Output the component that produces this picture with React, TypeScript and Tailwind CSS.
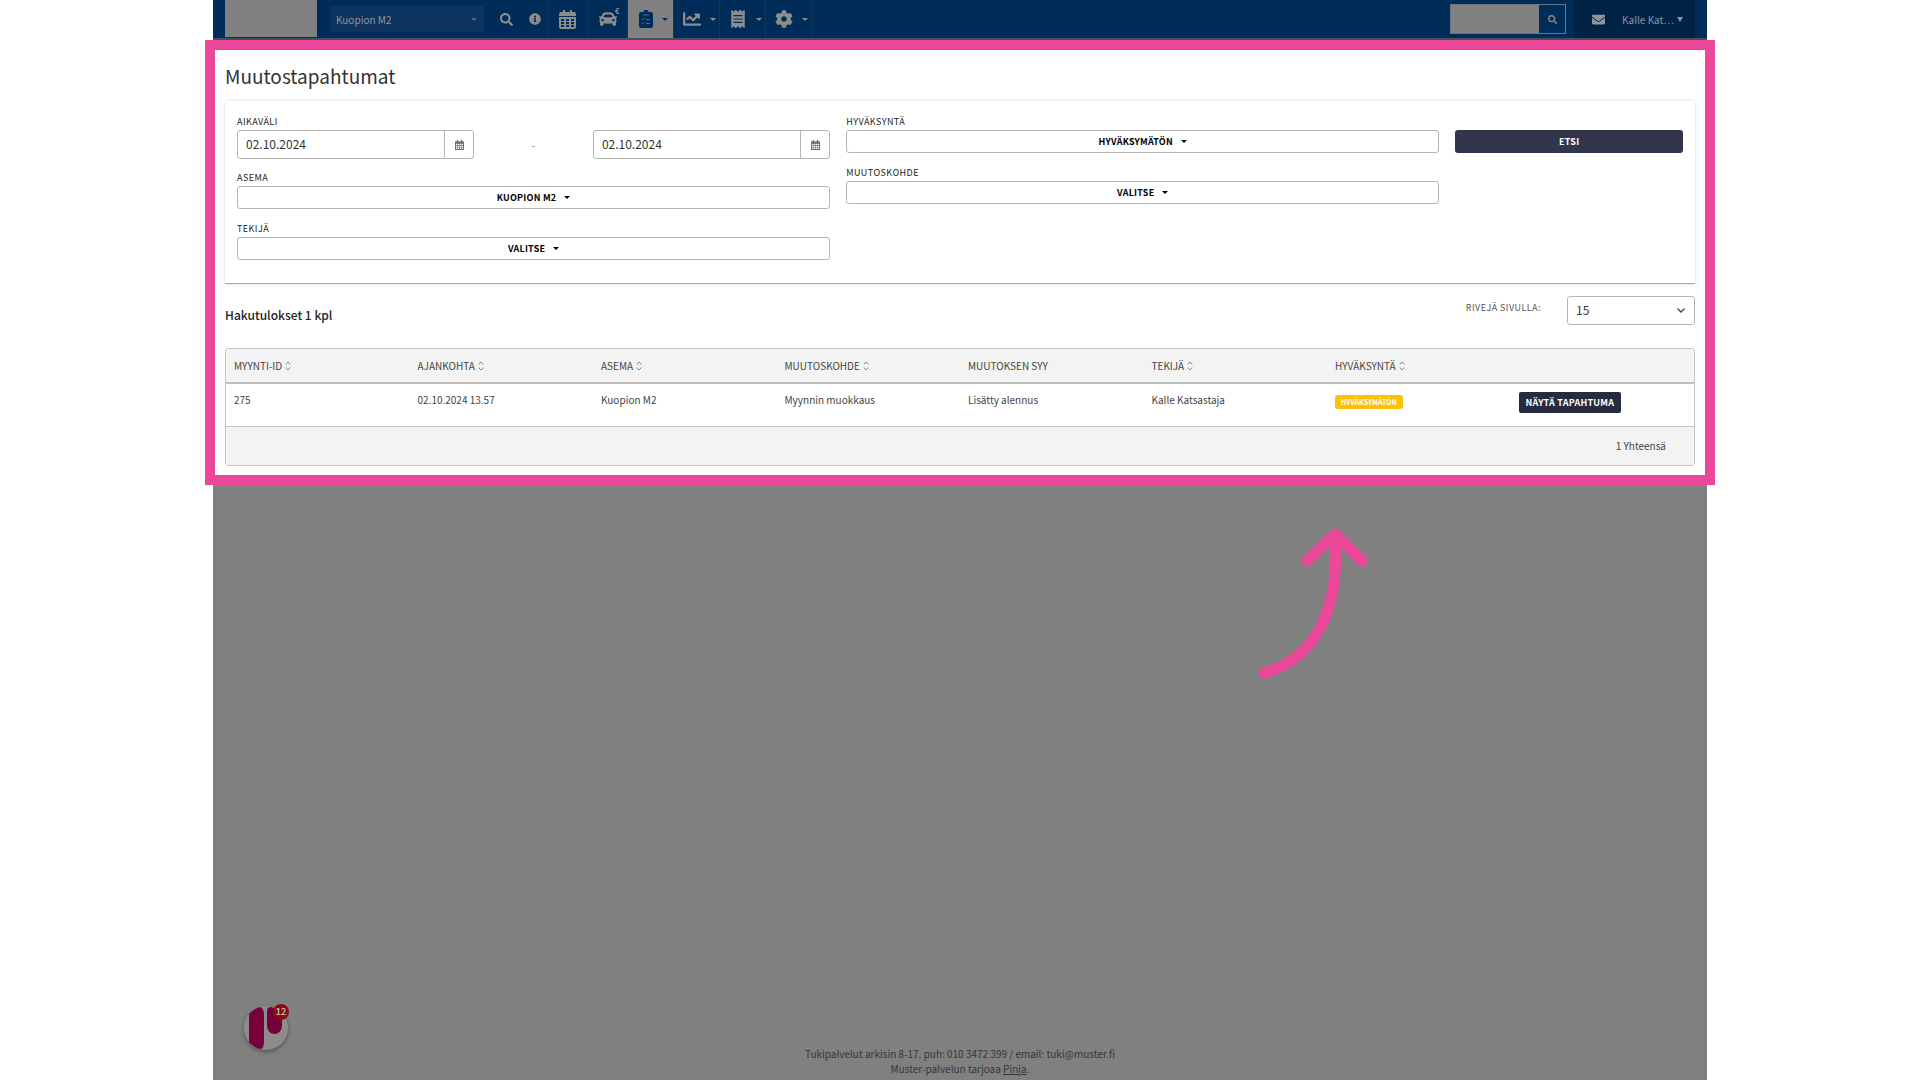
import type { ReactNode } from "react";
import {
  FaCar,
  FaChartLine,
  FaCog,
  FaEnvelope,
  FaInfoCircle,
  FaReceipt,
  FaSearch,
} from "react-icons/fa";

const columns = [
  { label: "MYYNTI-ID", sortable: true },
  { label: "AJANKOHTA", sortable: true },
  { label: "ASEMA", sortable: true },
  { label: "MUUTOSKOHDE", sortable: true },
  { label: "MUUTOKSEN SYY", sortable: false },
  { label: "TEKIJÄ", sortable: true },
  { label: "HYVÄKSYNTÄ", sortable: true },
];

const rows = [
  {
    id: "275",
    time: "02.10.2024 13.57",
    station: "Kuopion M2",
    target: "Myynnin muokkaus",
    reason: "Lisätty alennus",
    author: "Kalle Katsastaja",
    status: "HYVÄKSYMÄTÖN",
  },
];

function Caret({ className }: { className?: string }) {
  return (
    <svg viewBox="0 0 6 3" className={`w-[6px] h-[3px] shrink-0 ${className ?? ""}`}>
      <path d="M0 0h6L3 3z" fill="currentColor" />
    </svg>
  );
}

function CalendarGridIcon() {
  return (
    <svg viewBox="0 0 17 19" className="w-[17px] h-[19px]">
      <path
        d="M4 0h2v2h5V0h2v2h2a2 2 0 0 1 2 2v2H0V4a2 2 0 0 1 2-2h2z"
        fill="currentColor"
      />
      <path
        fillRule="evenodd"
        d="M0 7h17v10a2 2 0 0 1-2 2H2a2 2 0 0 1-2-2zM2 9v2h3V9zm5 0v2h3V9zm5 0v2h3V9zM2 12v2h3v-2zm5 0v2h3v-2zm5 0v2h3v-2zM2 15v2h3v-2zm5 0v2h3v-2zm5 0v2h3v-2z"
        fill="currentColor"
      />
    </svg>
  );
}

function CalendarSmallIcon() {
  return (
    <svg viewBox="0 0 10 11" className="w-[9px] h-[10px]">
      <path
        fillRule="evenodd"
        d="M2 0h1.500v1.500h3V0H8v1.500h2V11H0V1.500h2zM1 4v1.600h1.600V4zm2.200 0v1.600h1.600V4zm2.200 0v1.600H7V4zm2.200 0v1.600H9V4zM1 6.200v1.600h1.600V6.200zm2.200 0v1.600h1.600V6.200zm2.200 0v1.600H7V6.200zm2.200 0v1.600H9V6.200zM1 8.400V10h1.600V8.400zm2.200 0V10h1.600V8.400zm2.200 0V10H7V8.400zm2.200 0V10H9V8.400z"
        fill="#666"
      />
    </svg>
  );
}

function ClipboardIcon() {
  return (
    <svg viewBox="0 0 14 18" className="w-[14px] h-[18px]">
      <path
        d="M2 2h2.500a2.500 2.500 0 0 1 5 0H12a2 2 0 0 1 2 2v12a2 2 0 0 1-2 2H2a2 2 0 0 1-2-2V4a2 2 0 0 1 2-2z"
        fill="#002c59"
      />
      <path
        d="M4 5h6M7 9.500h4M7 13.500h4M2.500 9l1 1L5.500 8M2.800 13.500h1.600"
        fill="none"
        stroke="#808080"
        strokeWidth="0.700"
      />
    </svg>
  );
}

function SortIcon() {
  return (
    <svg viewBox="0 0 6 10" className="w-[6px] h-[10px]">
      <path
        d="M1 3.500V3l2-2 2 2v.500M1 6.500V7l2 2 2-2v-.500"
        fill="none"
        stroke="#888"
        strokeWidth="1"
      />
    </svg>
  );
}

function NavItem({
  label,
  caret,
  active,
  children,
}: {
  label: string;
  caret?: boolean;
  active?: boolean;
  children: ReactNode;
}) {
  return (
    <button
      aria-label={label}
      className={`flex items-center justify-center h-full border-r border-[#0c3763] ${
        caret ? "w-[46px] gap-[9px] pl-[6px]" : "w-10"
      } ${active ? "bg-[#808080] text-[#002c59]" : "text-[#8c8c8c]"}`}
    >
      {children}
      {caret && <Caret />}
    </button>
  );
}

function TopBar() {
  return (
    <header className="flex justify-between h-10 bg-[#002c59] border-b-2 border-[#43505c] px-3">
      <div className="flex h-full">
        <div className="w-[92px] h-[37px] bg-[#808080]" />
        <div className="relative flex items-center ml-[13px]">
          <select
            aria-label="Asema"
            className="appearance-none w-[154px] h-[26px] px-[6px] bg-[#0d345f] text-[#8f959c] text-[10px]"
          >
            <option>Kuopion M2</option>
          </select>
          <Caret className="absolute right-[7px] text-[#5c6470]" />
        </div>
        <button aria-label="Haku" className="ml-4 text-[#8c8c8c]">
          <FaSearch size={13} />
        </button>
        <button aria-label="Tiedot" className="ml-4 pr-[6px] border-r border-[#0c3763] text-[#8c8c8c]">
          <FaInfoCircle size={12} />
        </button>
        <NavItem label="Kalenteri">
          <CalendarGridIcon />
        </NavItem>
        <NavItem label="Ajoneuvot">
          <span className="relative">
            <FaCar size={18} />
            <span className="absolute -top-[5px] -right-[3px] text-[8px] leading-3 font-bold">€</span>
          </span>
        </NavItem>
        <NavItem label="Tapahtumat" caret active>
          <ClipboardIcon />
        </NavItem>
        <NavItem label="Raportit" caret>
          <FaChartLine size={18} />
        </NavItem>
        <NavItem label="Kuitit" caret>
          <FaReceipt size={18} />
        </NavItem>
        <NavItem label="Asetukset" caret>
          <FaCog size={18} />
        </NavItem>
      </div>
      <div className="flex items-center h-full">
        <form className="flex h-[30px] mr-2 border border-[#6b7682]">
          <input aria-label="Hakusana" className="w-[88px] h-full bg-[#808080]" />
          <button
            type="button"
            aria-label="Hae"
            className="flex items-center justify-center w-[26px] h-full text-[#8c8c8c]"
          >
            <FaSearch size={9} />
          </button>
        </form>
        <div className="flex items-center h-full bg-[#002345] pl-[18px] pr-3 text-[#8f959c] text-[10px]">
          <button aria-label="Viestit">
            <FaEnvelope size={13} />
          </button>
          <button className="flex items-center gap-[3px] ml-[17px]">
            Kalle Kat…
            <svg viewBox="0 0 6 5" className="w-[6px] h-[5px]">
              <path d="M0 0h6L3 5z" fill="currentColor" />
            </svg>
          </button>
        </div>
      </div>
    </header>
  );
}

function DateField({ id, label }: { id: string; label: string }) {
  return (
    <div className="col-span-2 flex h-[29px] border border-[#b5b5b5] rounded-[3px]">
      <input
        id={id}
        aria-label={label}
        defaultValue="02.10.2024"
        className="flex-1 min-w-0 px-2 pb-0.5 text-xs text-[#333]"
      />
      <button
        type="button"
        aria-label="Avaa kalenteri"
        className="flex items-center justify-center w-[29px] border-l border-[#b5b5b5]"
      >
        <CalendarSmallIcon />
      </button>
    </div>
  );
}

function Dropdown({ id, label, value }: { id: string; label: string; value: string }) {
  return (
    <div>
      <label htmlFor={id} className="block text-[9px] leading-4 tracking-wider text-[#222]">
        {label}
      </label>
      <button
        id={id}
        type="button"
        className="flex items-center justify-center gap-2 w-full h-[23px] border border-[#b5b5b5] rounded-[3px] text-[9px] font-bold tracking-wide text-black"
      >
        {value}
        <Caret />
      </button>
    </div>
  );
}

function SearchForm() {
  return (
    <form className="grid grid-cols-12 gap-4 h-[183px] px-3 pt-[13px] border-b border-[#aaa] shadow-[0_0_4px_rgba(0,0,0,0.15)]">
      <div className="col-span-5 flex flex-col">
        <label htmlFor="from" className="block text-[9px] leading-4 tracking-wider text-[#222]">
          AIKAVÄLI
        </label>
        <div className="grid grid-cols-5 mb-[11px]">
          <DateField id="from" label="Aikaväli alkaa" />
          <span className="flex items-center justify-center text-[10px] text-[#777]">-</span>
          <DateField id="to" label="Aikaväli päättyy" />
        </div>
        <div className="flex flex-col gap-3">
          <Dropdown id="station" label="ASEMA" value="KUOPION M2" />
          <Dropdown id="author" label="TEKIJÄ" value="VALITSE" />
        </div>
      </div>
      <div className="col-span-5 flex flex-col gap-3">
        <Dropdown id="approval" label="HYVÄKSYNTÄ" value="HYVÄKSYMÄTÖN" />
        <Dropdown id="target" label="MUUTOSKOHDE" value="VALITSE" />
      </div>
      <div className="col-span-2 pt-4">
        <button
          type="button"
          className="block w-full h-[23px] bg-[#32364c] rounded-[3px] text-[9px] font-bold tracking-wide text-white"
        >
          ETSI
        </button>
      </div>
    </form>
  );
}

function ResultsTable() {
  return (
    <div className="border border-[#c4c4c4] rounded-[3px] overflow-hidden">
      <table className="w-full table-fixed text-[10px] leading-4 text-[#444]">
        <thead className="bg-[#f3f3f3]">
          <tr className="h-[34px] border-b-2 border-[#bfbfbf]">
            {columns.map((column) => (
              <th key={column.label} className="px-2 text-left font-normal">
                <span className="flex items-center gap-[3px]">
                  {column.label}
                  {column.sortable && <SortIcon />}
                </span>
              </th>
            ))}
            <th aria-label="Toiminnot" />
          </tr>
        </thead>
        <tbody>
          {rows.map((row) => (
            <tr key={row.id} className="h-[43px] align-top border-b border-[#c4c4c4]">
              <td className="px-2 pt-2">{row.id}</td>
              <td className="px-2 pt-2">{row.time}</td>
              <td className="px-2 pt-2">{row.station}</td>
              <td className="px-2 pt-2">{row.target}</td>
              <td className="px-2 pt-2">{row.reason}</td>
              <td className="px-2 pt-2">{row.author}</td>
              <td className="px-2 pt-[11px]">
                <span className="block w-fit px-[6px] bg-[#ffc107] rounded-[3px] text-[7px] leading-[14px] font-bold text-white">
                  {row.status}
                </span>
              </td>
              <td className="px-2 pt-2">
                <button className="block h-[21px] px-[7px] bg-[#272b40] rounded-[2px] text-[9px] font-bold tracking-wide text-white whitespace-nowrap">
                  NÄYTÄ TAPAHTUMA
                </button>
              </td>
            </tr>
          ))}
        </tbody>
        <tfoot className="bg-[#f3f3f3]">
          <tr className="h-[39px]">
            <td colSpan={8} className="pr-7 text-right">
              1 Yhteensä
            </td>
          </tr>
        </tfoot>
      </table>
    </div>
  );
}

export default function App() {
  return (
    <div className="min-h-screen bg-white font-['Source_Sans_Pro','Noto_Sans_CJK_SC',sans-serif]">
      <div className="relative flex flex-col min-h-screen mx-[213px] bg-[#808080]">
        <TopBar />
        <main className="-mx-2 border-[10px] border-[#ec4899] bg-white px-[10px] pb-[9px]">
          <h1 className="pt-3 pb-[11px] text-[19px] leading-7 text-[#333]">Muutostapahtumat</h1>
          <SearchForm />
          <div className="flex justify-between h-16 pt-3">
            <h2 className="pt-[9px] text-xs leading-5 font-medium text-[#222]">
              Hakutulokset 1 kpl
            </h2>
            <div className="flex items-start">
              <label
                htmlFor="page-size"
                className="pt-1 mr-[26px] text-[9px] leading-4 tracking-wider text-[#555]"
              >
                RIVEJÄ SIVULLA:
              </label>
              <div className="relative flex items-center">
                <select
                  id="page-size"
                  className="appearance-none w-32 h-[29px] px-2 pb-0.5 border border-[#b5b5b5] rounded-[3px] text-xs text-[#333]"
                >
                  <option>15</option>
                </select>
                <svg viewBox="0 0 8 5" className="absolute right-[10px] w-2 h-[5px]">
                  <path d="M0.500 0.500L4 4l3.500-3.500" fill="none" stroke="#444" strokeWidth="1.300" />
                </svg>
              </div>
            </div>
          </div>
          <ResultsTable />
        </main>

        <svg
          viewBox="0 0 150 180"
          className="absolute top-[510px] right-[317px] w-[150px] h-[180px]"
          aria-hidden="true"
        >
          <path
            d="M24 163C72 149 101 105 95 24M67 51L95 24L122 51"
            fill="none"
            stroke="#ec4899"
            strokeWidth="11"
            strokeLinecap="round"
            strokeLinejoin="round"
          />
        </svg>

        <button
          aria-label="Avaa tuki, 12 uutta"
          className="absolute left-[31px] bottom-[30px] w-11 h-11 rounded-full bg-[#8c8c8c] shadow-[0_2px_4px_rgba(0,0,0,0.35)]"
        >
          <svg viewBox="0 0 44 44" className="w-11 h-11">
            <path
              d="M5 8Q11 2 16 1Q20 2 20 9V35Q20 42 17 43Q10 42 5 36z"
              fill="#76003a"
            />
            <path d="M23 5Q23 1 27 1Q34 3 38 9V20A7.500 8 0 0 1 23 20z" fill="#76003a" />
          </svg>
          <span className="absolute -top-[2px] -right-[1px] flex items-center justify-center w-4 h-4 rounded-full bg-[#8c0b0b] text-[9px] font-bold text-[#b5b5b5]">
            12
          </span>
        </button>

        <footer className="mt-auto pb-1 text-center text-[10px] leading-[15px] text-[#363636]">
          <p>Tukipalvelut arkisin 8-17. puh: 010 3472 399 / email: tuki@muster.fi</p>
          <p>
            Muster-palvelun tarjoaa{" "}
            <a href="#pinja" className="underline">
              Pinja
            </a>
            .
          </p>
        </footer>
      </div>
    </div>
  );
}
